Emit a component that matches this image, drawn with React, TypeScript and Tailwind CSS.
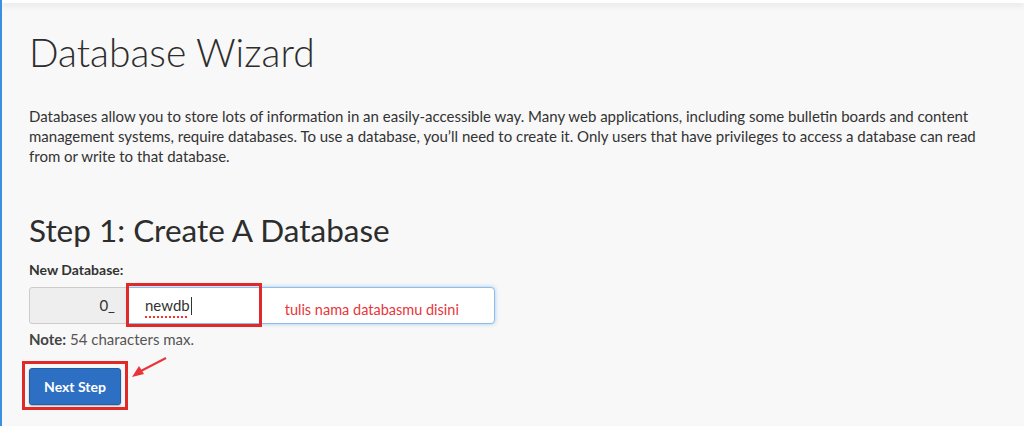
export default function App() {
  return (
    <div className="relative h-[426px] w-[1024px] overflow-hidden border-l-2 border-[#3d8fe0] bg-[#f8f8f8] font-['Lato',sans-serif] text-[#333]">
      {/* top bar */}
      <div className="h-[3px] bg-white shadow-[0_2px_6px_rgba(0,0,0,0.12)]" />

      <div className="px-[27px]">
        <h1 className="mt-[25px] text-[39px] font-light leading-[48px] text-[#2d2d2d]">Database Wizard</h1>

        <p className="mt-[30px] w-[960px] text-[15px] leading-[20px]">
          Databases allow you to store lots of information in an easily-accessible way. Many web applications, including some bulletin boards and content
          management systems, require databases. To use a database, you’ll need to create it. Only users that have privileges to access a database can read
          from or write to that database.
        </p>

        <h2 className="mt-[44px] text-[31.5px] leading-[40px] text-[#2d2d2d]">Step 1: Create A Database</h2>

        <label className="mt-[11px] block text-[14px] font-bold leading-[18px]">New Database:</label>

        <div className="mt-[8px] flex h-[37px] w-[466px]">
          <div className="flex w-[99px] items-center justify-end rounded-l-[3px] border border-[#ccc] bg-[#eee] pr-[12px] text-[15px]">
            0_
          </div>
          <div className="relative flex flex-1 items-center rounded-r-[4px] border border-[#8fbce9] bg-white shadow-[0_0_4px_rgba(102,175,233,0.6)]">
            <span className="ml-[16px] text-[15px] leading-none text-[#333] underline decoration-[#e33] decoration-dotted decoration-2 underline-offset-[5px]">
              newdb
            </span>
            <span className="ml-[1px] h-[18px] w-px bg-[#333]" />
            <span className="ml-[93px] mt-[8px] text-[14.5px] text-[#e8353a]">tulis nama databasmu disini</span>
            {/* highlight around input */}
            <div className="absolute left-[-3px] top-[-5px] h-[44px] w-[136px] border-[3px] border-[#e02a2a]" />
          </div>
        </div>

        <p className="mt-[6px] text-[15px] leading-[18px] text-[#555]">
          <b className="text-[#444]">Note:</b> 54 characters max.
        </p>

        <div className="relative mt-[20px] w-fit">
          <button className="h-[37px] w-[92px] rounded-[3px] border border-[#1f5fa8] bg-[#2d6fc3] text-[14px] font-bold text-white shadow-[0_1px_2px_rgba(0,0,0,0.3)]">
            Next Step
          </button>
          <div className="absolute left-[-7px] top-[-7px] h-[49px] w-[106px] border-[3px] border-[#e02a2a]" />
          <svg className="absolute left-[100px] top-[-12px]" width="40" height="24" viewBox="0 0 40 24">
            <line x1="37" y1="2" x2="10" y2="16" stroke="#e8353a" strokeWidth="2" />
            <polygon points="3,21 10,10 15,18" fill="#e8353a" />
          </svg>
        </div>
      </div>
    </div>
  );
}
